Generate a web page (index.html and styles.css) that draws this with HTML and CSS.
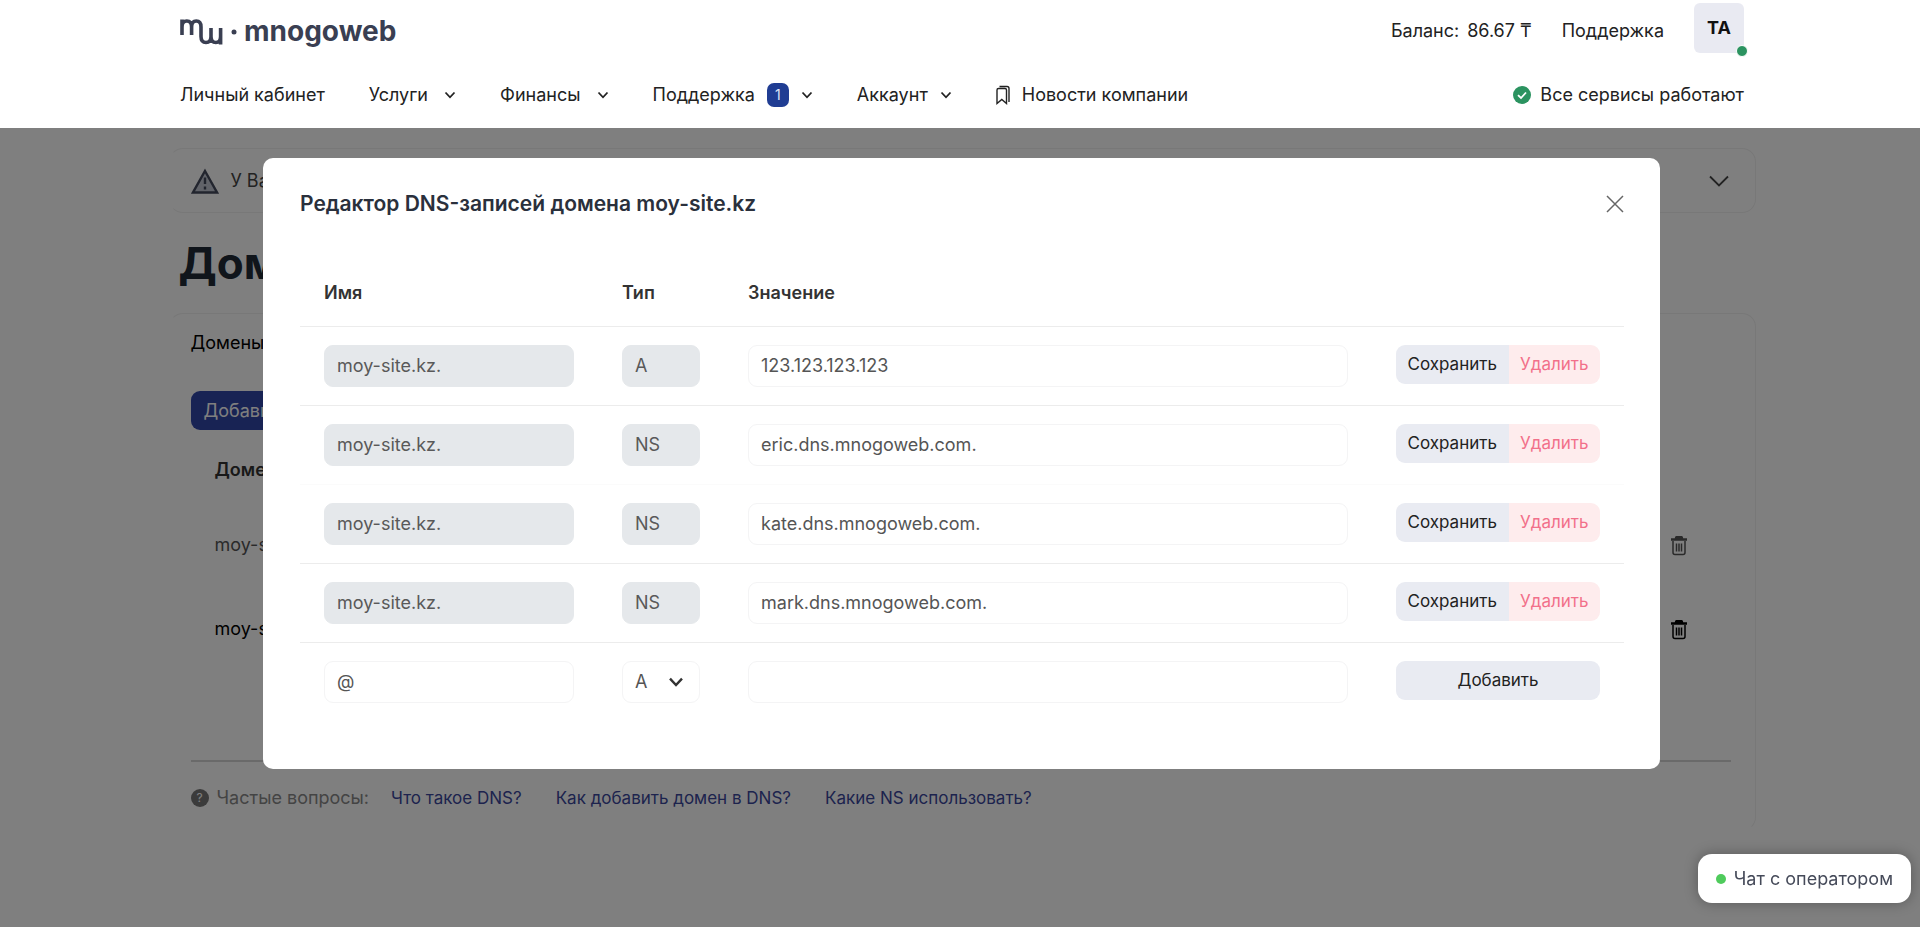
FILE: index.html
```html
<!DOCTYPE html>
<html lang="ru">
<head>
<meta charset="utf-8">
<meta name="viewport" content="width=device-width, initial-scale=1">
<title>Домены — mnogoweb</title>
<link rel="stylesheet" href="styles.css">
</head>
<body>
<svg class="sprite" aria-hidden="true">
  <symbol id="chevron" viewBox="0 0 12 12"><path d="M1.500 3.500 6 8.300l4.500-4.800" fill="none" stroke="currentColor" stroke-width="1.800"/></symbol>
  <symbol id="trash" viewBox="0 0 18 20"><path d="M1 3.500h16M6 2.300q0-1.300 1.300-1.300h3.400q1.300 0 1.300 1.300" fill="none" stroke="currentColor" stroke-width="2.400"/><path d="M3 5v11.500q0 2 2 2h8q2 0 2-2V5M6.500 7.500v8M9 7.500v8M11.500 7.500v8" fill="none" stroke="currentColor" stroke-width="1.500"/></symbol>
</svg>

<header class="header">
  <div class="container topbar">
    <a class="logo" href="#">
      <svg class="logo-mark" viewBox="180 18 58 32" aria-hidden="true">
        <path d="M182 38V22.500M182 30q0-6 4.800-6t4.800 6V38M191.600 30q0-6 4.700-6t4.700 6v9.500q0 6 5 6t5-6V31M211 39.500q0 6 4.800 6t4.800-6V31M220.600 38v9.500" fill="none" stroke="currentColor" stroke-width="3.600"/>
        <circle cx="234" cy="35" r="2.500" fill="currentColor"/>
      </svg>
      <span class="logo-name">mnogoweb</span>
    </a>
    <div class="account">
      <span class="balance"><span>Баланс:</span><span>86.67 ₸</span></span>
      <a href="#">Поддержка</a>
      <button class="avatar" type="button">TA<span class="online"></span></button>
    </div>
  </div>
  <nav class="container nav">
    <a class="item" href="#">Личный кабинет</a>
    <a class="item wide" href="#">Услуги<svg class="chev"><use href="#chevron"/></svg></a>
    <a class="item wide" href="#">Финансы<svg class="chev"><use href="#chevron"/></svg></a>
    <a class="item" href="#">Поддержка<span class="badge">1</span><svg class="chev"><use href="#chevron"/></svg></a>
    <a class="item" href="#">Аккаунт<svg class="chev"><use href="#chevron"/></svg></a>
    <a class="item" href="#"><svg class="bookmark" viewBox="0 0 14 20" aria-hidden="true"><path d="M1 18.500V5q0-1.500 1.500-1.500h6.500q1.500 0 1.500 1.500v13.500L5.800 14.500ZM3.500 1.500h7.500q2 0 2 2V17" fill="none" stroke="currentColor" stroke-width="1.400"/></svg>Новости компании</a>
    <a class="item status" href="#"><svg class="ok" viewBox="0 0 18 18" aria-hidden="true"><circle cx="9" cy="9" r="9" fill="#2b9360"/><path d="M5 9.200 8 12l5-5.500" fill="none" stroke="#fff" stroke-width="1.800"/></svg>Все сервисы работают</a>
  </nav>
</header>

<div class="stage">
  <main class="page">
    <section class="alert">
      <svg class="warn" viewBox="0 0 28 26" aria-hidden="true"><path d="M14 3 26 24.500H2Z" fill="#c3c7d3" stroke="#444a5c" stroke-width="2.400"/><path d="M14 9.500v6.500M14 18.500v3" stroke="#444a5c" stroke-width="2.400"/></svg>
      <span>У Вас есть неоплаченные услуги</span>
      <svg class="alert-chev" viewBox="0 0 20 12" aria-hidden="true"><path d="M1 1.500 10 10.500 19 1.500" fill="none" stroke="currentColor" stroke-width="1.800"/></svg>
    </section>
    <h1 class="heading">Домены</h1>
    <section class="card">
      <a class="tab" href="#">Домены</a>
      <button class="primary" type="button">Добавить домен</button>
      <table class="domains">
        <thead><tr><th>Домен</th><th></th></tr></thead>
        <tbody>
          <tr class="muted"><td>moy-site.kz</td><td class="remove"><button class="icon" type="button" aria-label="Удалить"><svg><use href="#trash"/></svg></button></td></tr>
          <tr><td>moy-site.kz</td><td class="remove"><button class="icon" type="button" aria-label="Удалить"><svg><use href="#trash"/></svg></button></td></tr>
        </tbody>
      </table>
      <div class="faq">
        <span class="faq-title"><span class="question">?</span>Частые вопросы:</span>
        <a href="#">Что такое DNS?</a>
        <a href="#">Как добавить домен в DNS?</a>
        <a href="#">Какие NS использовать?</a>
      </div>
    </section>
  </main>

  <div class="overlay">
    <div class="modal" role="dialog" aria-labelledby="modal-title">
      <div class="modal-head">
        <h2 class="modal-title" id="modal-title">Редактор DNS-записей домена moy-site.kz</h2>
        <button class="close" type="button" aria-label="Закрыть"><svg viewBox="0 0 18 18"><path d="M1 1l16 16M17 1 1 17" stroke="currentColor" stroke-width="1.500"/></svg></button>
      </div>
      <table class="records">
        <colgroup><col class="c-name"><col class="c-type"><col class="c-value"><col class="c-act"></colgroup>
        <thead><tr><th>Имя</th><th>Тип</th><th>Значение</th><th></th></tr></thead>
        <tbody>
          <tr>
            <td><input class="field" aria-label="Имя" value="moy-site.kz." disabled></td>
            <td><input class="field" aria-label="Тип" value="A" disabled></td>
            <td><input class="field" aria-label="Значение" value="123.123.123.123"></td>
            <td><div class="actions"><button class="btn save" type="button">Сохранить</button><button class="btn delete" type="button">Удалить</button></div></td>
          </tr>
          <tr class="soft">
            <td><input class="field" aria-label="Имя" value="moy-site.kz." disabled></td>
            <td><input class="field" aria-label="Тип" value="NS" disabled></td>
            <td><input class="field" aria-label="Значение" value="eric.dns.mnogoweb.com."></td>
            <td><div class="actions"><button class="btn save" type="button">Сохранить</button><button class="btn delete" type="button">Удалить</button></div></td>
          </tr>
          <tr>
            <td><input class="field" aria-label="Имя" value="moy-site.kz." disabled></td>
            <td><input class="field" aria-label="Тип" value="NS" disabled></td>
            <td><input class="field" aria-label="Значение" value="kate.dns.mnogoweb.com."></td>
            <td><div class="actions"><button class="btn save" type="button">Сохранить</button><button class="btn delete" type="button">Удалить</button></div></td>
          </tr>
          <tr>
            <td><input class="field" aria-label="Имя" value="moy-site.kz." disabled></td>
            <td><input class="field" aria-label="Тип" value="NS" disabled></td>
            <td><input class="field" aria-label="Значение" value="mark.dns.mnogoweb.com."></td>
            <td><div class="actions"><button class="btn save" type="button">Сохранить</button><button class="btn delete" type="button">Удалить</button></div></td>
          </tr>
          <tr class="last">
            <td><input class="field" aria-label="Имя" value="@"></td>
            <td><div class="select"><select class="field" aria-label="Тип"><option>A</option><option>NS</option><option>MX</option></select><svg class="select-chev"><use href="#chevron"/></svg></div></td>
            <td><input class="field" aria-label="Значение" value=""></td>
            <td><div class="actions"><button class="btn save" type="button">Добавить</button></div></td>
          </tr>
        </tbody>
      </table>
    </div>
  </div>
</div>

<button class="chat" type="button"><span class="chat-dot"></span>Чат с оператором</button>
</body>
</html>
```

FILE: styles.css
```css
* { box-sizing: border-box; }

body {
  margin: 0;
  min-height: 100vh;
  display: flex;
  flex-direction: column;
  background: #fff;
  color: #222;
  font: 18px/24px Inter, "Open Sans", sans-serif;
}

a { color: inherit; text-decoration: none; }
button { border: 0; padding: 0; background: none; color: inherit; font: inherit; cursor: pointer; }
input, select { font: inherit; color: inherit; }

.sprite { display: none; }

.container {
  width: 100%;
  max-width: 1568px;
  margin: 0 auto;
  padding-left: 4px;
  display: flex;
  align-items: center;
}

/* Header */
.header { height: 128px; white-space: nowrap; }
.topbar { height: 62px; justify-content: space-between; }
.logo { display: flex; align-items: center; gap: 6px; color: #3a3f52; }
.logo-mark { width: 58px; height: 32px; }
.logo-name { font-size: 28px; line-height: 32px; font-weight: 700; }
.account { display: flex; align-items: center; gap: 30px; height: 56px; }
.balance { display: flex; gap: 8px; }
.avatar {
  position: relative;
  align-self: flex-start;
  width: 50px;
  height: 50px;
  border-radius: 6px;
  background: #e9eaf2;
  color: #111;
  font-weight: 700;
}
.online {
  position: absolute;
  right: -4px;
  bottom: -4px;
  width: 12px;
  height: 12px;
  border: 1px solid #fff;
  border-radius: 50%;
  background: #2b9360;
}
.nav { height: 66px; gap: 44px; }
.item { display: flex; align-items: center; gap: 12px; }
.wide { gap: 16px; }
.chev { width: 12px; height: 12px; }
.badge {
  width: 22px;
  border-radius: 7px;
  background: #203d93;
  color: #dfe5f7;
  font-size: 14px;
  text-align: center;
}
.bookmark { width: 14px; height: 20px; }
.status { margin-left: auto; gap: 9px; }
.ok { width: 18px; height: 18px; }

/* Page below the dialog */
.stage { position: relative; flex: 1; overflow: hidden; }
.page { max-width: 1591px; margin: 0 auto; padding: 20px 0 0 4px; }
.alert {
  display: flex;
  align-items: center;
  gap: 12px;
  height: 65px;
  padding: 0 26px 0 21px;
  border: 1px solid #f0f0f0;
  border-left-color: transparent;
  border-radius: 14px;
  color: #444;
}
.warn { width: 28px; height: 26px; }
.alert-chev { width: 20px; height: 12px; margin-left: auto; }
.heading { margin: 24px 10px; font-size: 44px; line-height: 52px; font-weight: 700; color: #212b36; }
.card {
  display: flex;
  flex-direction: column;
  align-items: flex-start;
  padding: 17px 24px 20px 21px;
  border: 1px solid #f0f0f0;
  border-left-color: transparent;
  border-bottom-color: transparent;
  border-radius: 14px;
}
.tab { color: #000; }
.primary {
  height: 39px;
  margin-top: 36px;
  padding: 0 13px;
  border-radius: 9px;
  background: #3046a8;
  color: #fff;
}
.domains { width: 100%; border-collapse: collapse; color: #000; }
.domains th { height: 80px; padding: 0 24px; text-align: left; font-weight: 600; color: #333; }
.domains td { height: 98px; padding: 0 24px; }
.domains tbody tr:first-child td { height: 70px; }
.domains .remove { text-align: right; padding-right: 43px; }
.domains .muted { color: #555; }
.icon { vertical-align: middle; }
.icon svg { display: block; width: 18px; height: 20px; }
.faq {
  display: flex;
  align-items: center;
  gap: 34px;
  width: 100%;
  margin-top: 82px;
  padding-top: 24px;
  border-top: 2px solid #d5d5d5;
  color: #3b479c;
  font-size: 17px;
}
.faq-title { display: flex; align-items: center; gap: 8px; margin-right: -12px; color: #888; font-size: 18px; }
.question {
  width: 18px;
  border-radius: 50%;
  background: #777;
  color: #fff;
  font-size: 12px;
  line-height: 18px;
  text-align: center;
}

/* Dialog */
.overlay { position: absolute; inset: 0; padding: 30px 0 0 3px; background: rgba(0, 0, 0, 0.5); }
.modal {
  max-width: 1397px;
  margin: 0 auto;
  padding: 30px 36px 48px 37px;
  border-radius: 10px;
  background: #fff;
}
.modal-head { display: flex; align-items: center; justify-content: space-between; height: 32px; }
.modal-title { margin: 0; font-size: 21px; line-height: 28px; font-weight: 600; color: #2a303c; }
.close { color: #666; }
.close svg { display: block; width: 18px; height: 18px; }
.records { width: 100%; margin-top: 40px; border-collapse: collapse; table-layout: fixed; color: #555; }
.c-name { width: 298px; }
.c-type { width: 126px; }
.c-act { width: 252px; }
.records th { height: 66px; padding: 0 24px; text-align: left; font-weight: 600; color: #333; }
.records td { height: 79px; padding: 0 24px; vertical-align: middle; }
.records tr { border-bottom: 1px solid #ececec; }
.records .soft { border-bottom-color: #fbfbfb; }
.records .last { border-bottom: 0; }
.field {
  display: block;
  width: 100%;
  height: 42px;
  padding: 0 12px;
  border: 1px solid #f4f4f5;
  border-radius: 9px;
  background: #fff;
  outline: none;
}
.field:disabled { background: #e5e8eb; border-color: #e5e8eb; color: #595959; opacity: 1; }
.select { position: relative; }
.select .field { appearance: none; }
.select-chev { position: absolute; right: 16px; top: 13px; width: 16px; height: 16px; color: #333; pointer-events: none; }
.actions { display: flex; height: 42px; padding-bottom: 3px; }
.btn { flex: auto; font-size: 17px; }
.save { background: #e9ebf2; color: #222; }
.delete { background: #feeced; color: #f2708a; }
.btn:first-child { border-top-left-radius: 9px; border-bottom-left-radius: 9px; }
.btn:last-child { border-top-right-radius: 9px; border-bottom-right-radius: 9px; }

/* Chat launcher */
.chat {
  position: fixed;
  right: 9px;
  bottom: 24px;
  display: flex;
  align-items: center;
  gap: 8px;
  height: 49px;
  padding: 0 18px;
  border-radius: 14px;
  background: #fff;
  color: #454a59;
  box-shadow: 0 0 14px rgba(0, 0, 0, 0.3);
}
.chat-dot { width: 10px; height: 10px; border-radius: 50%; background: #4fcb5c; }
```
